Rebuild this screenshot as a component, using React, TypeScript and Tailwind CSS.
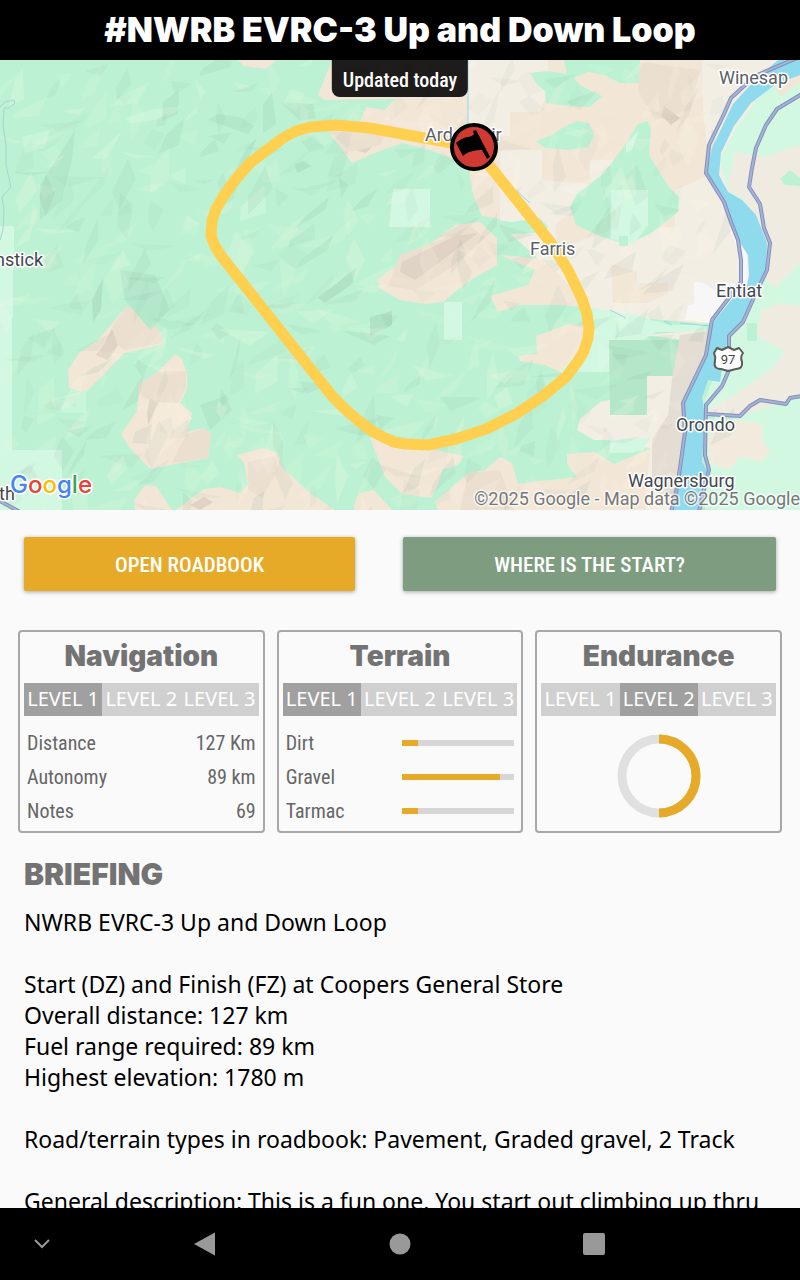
import React from 'react';

interface Point {
  x: number;
  y: number;
}

interface MapLabel {
  name: string;
  at: Point;
  faded?: boolean;
}

interface CardProps {
  title: string;
  level: number;
  children: React.ReactNode;
}

const LEVELS = [1, 2, 3];

const STATS = [
  { label: 'Distance', value: '127 Km' },
  { label: 'Autonomy', value: '89 km' },
  { label: 'Notes', value: '69' },
];

const SURFACES = [
  { label: 'Dirt', percent: 14 },
  { label: 'Gravel', percent: 87 },
  { label: 'Tarmac', percent: 14 },
];

const BRIEFING = `NWRB EVRC-3 Up and Down Loop

Start (DZ) and Finish (FZ) at Coopers General Store
Overall distance: 127 km
Fuel range required: 89 km
Highest elevation: 1780 m

Road/terrain types in roadbook: Pavement, Graded gravel, 2 Track

General description: This is a fun one. You start out climbing up thru`;

const PLACES: MapLabel[] = [
  { name: 'Winesap', at: { x: 719, y: 84 }, faded: true },
  { name: 'Ardenvoir', at: { x: 425, y: 141 }, faded: true },
  { name: 'Farris', at: { x: 530, y: 255 }, faded: true },
  { name: 'Entiat', at: { x: 716, y: 297 } },
  { name: 'Orondo', at: { x: 676, y: 431 } },
  { name: 'Wagnersburg', at: { x: 628, y: 487 } },
  { name: 'nstick', at: { x: -5, y: 266 } },
  { name: 'th', at: { x: -1, y: 500 } },
];

const GREEN = '#bcf2d3';
const PALE_GREEN = '#d2f8e2';
const SAND = '#f2e6d7';
const CREAM = '#f3eee4';

const TERRAIN = [
  // sandy ground east of the forest
  { fill: SAND, d: 'M332 60L318 95L325 100L395 99L385 110L366 107L357 129L328 131L352 163L372 154L402 143L430 150L468 165L473 195L482 216L500 219L535 225L552 232L560 260L500 255L535 270L528 285L490 296L498 312L520 305L562 305L590 308L640 318L680 322L800 330V60Z' },
  { fill: SAND, d: 'M238 60L244 66L266 69L276 60Z' },
  { fill: CREAM, d: 'M468 60H548V90L540 112H510V136H468Z' },
  { fill: CREAM, d: 'M500 150H542V180L590 184V160H613V178L580 205L555 225L560 255L540 260L500 225Z' },
  { fill: CREAM, d: 'M702 60H800V330L640 318L590 308L545 260L600 230L675 227V190L710 175L703 110Z' },
  { fill: SAND, d: 'M611 264L637 272V283H668V294L647 303H613Z' },
  { fill: '#f7f7f7', d: 'M694 282L740 284L741 258L728 225L746 240L748 285L712 323L685 320L688 306L694 304Z' },
  // woodland east of the route
  { fill: GREEN, d: 'M564 60H640V83L620 83L604 75L588 72L574 78L581 86L602 96L590 107L570 106L546 103L545 91L538 85L530 73L548 71L567 74Z' },
  { fill: GREEN, d: 'M536 141L550 136L562 128L577 121L589 123L594 135L588 147L568 150L545 148Z' },
  { fill: GREEN, d: 'M626 144L637 125L647 121L651 128L649 155L668 186L679 197L678 212L650 234L627 244L602 237L576 225L570 207L577 194L603 174Z' },
  { fill: PALE_GREEN, d: 'M611 190H648V225L634 244L611 239Z' },
  { fill: GREEN, d: 'M619 236H628V246H619Z' },
  { fill: PALE_GREEN, d: 'M626 144L639 130L632 150L626 153Z' },
  { fill: GREEN, d: 'M482 218L512 222L540 218L548 227L535 233L510 234L492 230Z' },
  // hills
  { fill: SAND, d: 'M378 280L390 270L425 248L455 225L480 222L497 238V265L466 283L443 302L425 304L400 300L379 288Z' },
  { fill: SAND, d: 'M126 307L136 308L151 320L160 332L163 343L152 347L124 353L104 374L85 393L69 388L68 370L79 353L98 340Z' },
  { fill: SAND, d: 'M175 354L182 359L187 374L187 389L180 403L192 413L187 432L204 428L211 434L208 458L150 469L129 447L121 434L137 411L139 384L158 372Z' },
  { fill: SAND, d: 'M145 485L156 486L172 510H135L134 500Z' },
  { fill: SAND, d: 'M176 510L204 489L220 487L240 493L248 484L244 463L237 455L263 448L278 453L283 468L310 493L335 510Z' },
  { fill: SAND, d: 'M370 438L384 434L427 448L464 456L457 465L443 469L438 485L431 498L402 494L385 477Z' },
  { fill: SAND, d: 'M354 505L359 493L374 490L386 503L392 510H354Z' },
  { fill: SAND, d: 'M438 510L435 502L468 473L485 470L500 457L512 463L518 484L540 481L577 477L567 464L567 454L595 452L614 464L650 449L700 420V510Z' },
  { fill: SAND, d: 'M519 356L537 354L536 336L569 324L588 326L585 350L565 374L545 365L520 361Z' },
  { fill: PALE_GREEN, d: 'M584 306L604 310L640 316L668 325L706 325L705 332L655 332L640 342L612 372H560L588 340Z' },
  { fill: CREAM, d: 'M645 335L706 330L708 352L685 402V435L670 510H645L650 448L610 440L594 440L577 430L580 419L600 402L647 392V376H684V340Z' },
  { fill: '#b4e7c9', d: 'M609 340H684V376H647V415H610Z' },
  { fill: PALE_GREEN, d: 'M610 440L650 438L643 450L630 453H610Z' },
  { fill: '#e4ddd3', d: 'M680 335L708 331L706 355L684 402V435L679 478L675 500L652 490V440L668 415L672 380Z' },
  // east bank of the river
  { fill: PALE_GREEN, d: 'M800 65L760 95L735 130L720 160L728 192L765 240L752 300L728 340L705 400V510H800Z' },
  { fill: '#f0ebe0', d: 'M735 152L765 157L800 145V262L775 288L762 275L768 245L745 200L727 190Z' },
  { fill: '#f0ebe0', d: 'M762 310L780 303L800 306V396L740 416L706 411L730 398L770 370L785 352L756 335Z' },
  { fill: '#f3eade', d: 'M708 436L735 420L762 424L763 443L770 450L762 462L740 456L730 470L710 463Z' },
  { fill: SAND, d: 'M774 88L800 65V82L782 96Z' },
  { fill: GREEN, d: 'M780 179L790 170L800 178V186L785 185Z' },
  { fill: GREEN, d: 'M747 323H757V341H747Z' },
  // cleared plots
  { fill: PALE_GREEN, d: 'M0 226H14V270H13V318H12V450H62V510H0Z' },
  { fill: PALE_GREEN, d: 'M393 189H430V227H389Z' },
  { fill: PALE_GREEN, d: 'M444 302H462V340H444Z' },
];

const SHADES = [
  { fill: '#dfd3c5', d: 'M112 328L118 345L108 360L96 355L105 343Z' },
  { fill: '#ebdfd0', d: 'M126 307L136 308L151 320L160 332L163 343L124 350L118 345L112 328Z' },
  { fill: '#f5ebdb', d: 'M158 402L180 403L192 418L180 436L160 455L152 466L146 440Z' },
  { fill: '#ebdfd0', d: 'M139 384L158 372L186 370L186 388L178 403L155 402L141 396Z' },
  { fill: '#ebdfd0', d: 'M187 434L204 428L211 434L208 458L172 463L180 446Z' },
  { fill: '#dfd3c5', d: 'M150 398L158 403L148 425L147 412Z' },
  { fill: '#ebdfd0', d: 'M400 255L440 240L470 226L485 238L450 268L415 290L388 286Z' },
  { fill: '#dfd3c5', d: 'M402 262L455 236L478 233L440 262L415 280L400 272Z' },
  { fill: '#dfd3c5', d: 'M345 145L360 136L380 139L366 153L350 149Z' },
  { fill: '#ebdfd0', d: 'M328 131L385 134L380 145L352 152Z' },
  { fill: '#ebdfd0', d: 'M640 62L700 70L690 110L655 120L638 90Z' },
  { fill: '#dfd3c5', d: 'M664 106L680 118L671 125L662 116Z' },
  { fill: '#ebdfd0', d: 'M468 473L500 470L514 510H460Z' },
  { fill: '#ebdfd0', d: 'M248 462L275 456L278 470L262 498L248 490Z' },
  { fill: '#dfd3c5', d: 'M190 505L204 497L213 502L200 510Z' },
  { fill: '#b0e2c5', d: 'M318 298L356 268L352 284L325 303Z' },
  { fill: '#b0e2c5', d: 'M92 300L103 278L101 310L93 322Z' },
  { fill: '#b0e2c5', d: 'M295 165L303 161L312 166L297 173Z' },
  { fill: '#b0e2c5', d: 'M370 317L392 311V325L370 336Z' },
  { fill: '#b4e8cb', d: 'M208 120L218 114L240 117L254 126L248 134Z' },
  { fill: '#b4e8cb', d: 'M120 270L155 275L170 310L150 330L125 300Z' },
  { fill: '#b4e8cb', d: 'M40 185L75 130L72 160L62 200L40 220Z' },
  { fill: '#b4e8cb', d: 'M200 405L225 396L232 410L210 430Z' },
  { fill: '#b4e8cb', d: 'M280 102L313 104L316 118L300 121Z' },
  { fill: '#c9f5da', d: 'M125 118L150 110L181 106L175 113L150 121L130 123Z' },
  { fill: '#c9f5da', d: 'M22 137L50 130L45 148L25 153Z' },
  { fill: '#c9f5da', d: 'M241 207L264 185L266 213L240 221Z' },
  { fill: '#c9f5da', d: 'M52 400L86 390V413L56 412Z' },
];

const RIVER =
  'M800 60H778L755 80L733 104L712 148L706 174L724 203L738 240L748 255L749 275L747 285L733 298L713 322L706 355L684 403L686 432L680 468L672 510H698L708 472L702 462L705 415L702 398L708 380L720 382L724 355L729 336L743 320L754 300L766 270L767 243L756 215L742 200L728 192L719 175L721 153L734 126L751 103L776 84L800 75Z';

const ROADS = [
  'M797 58L755 76L731 98L724 114L709 145L706 173L724 202L731 222L738 240L741 260V282L725 303L712 320L706 355L683 403L685 432L680 468L677 488L671 512',
  'M802 94L777 109L766 125L756 148L752 168L749 187L760 204L764 228L770 243L767 270L755 295L743 322L729 336V370L722 386L706 405L705 455L709 470L705 485L699 512',
  'M706 414L740 416L750 406L760 400L786 404L790 398L802 396',
  'M-2 500L20 512',
];

const ROUTE =
  'M474 147L402 134L370 128L335 125L310 127L296 131L283 138L250 163L235 180L223 197L216 209L212 221L211 236L215 246L222 257L313 372L333 397L346 410L360 422L372 431L383 437L394 442L405 444L428 445L456 439L486 429L516 414L543 396L566 377L578 361L584 351L588 338L589 328L587 314L582 299L568 270L551 243L485 160Z';

const DISPLAY = "font-['Inter','Liberation_Sans',sans-serif] font-black";
const CONDENSED = "font-['Roboto_Condensed','Roboto','Liberation_Sans',sans-serif]";

// Seeded so that the relief looks the same on every render
function makeFacets(): { points: string; light: boolean; alpha: number }[] {
  let seed = 4211;
  const next = () => {
    seed = (seed * 16807) % 2147483647;
    return seed / 2147483647;
  };
  const facets = [];
  for (let y = 60; y < 510; y += 24) {
    for (let x = 0; x < 700; x += 24) {
      const cx = x + next() * 30;
      const cy = y + next() * 30;
      const length = 8 + next() * 18;
      const width = 4 + next() * 11;
      const angle = 0.3 - next() * 2.1;
      const ux = Math.cos(angle);
      const uy = Math.sin(angle);
      const bend = (next() - 0.5) * length;
      const corners = [
        [cx - ux * length, cy - uy * length],
        [cx + ux * bend - uy * width, cy + uy * bend + ux * width],
        [cx + ux * length, cy + uy * length],
        [cx - ux * bend + uy * width * next(), cy - uy * bend],
      ];
      facets.push({
        points: corners.map(c => c.map(Math.round).join(',')).join(' '),
        light: next() > 0.5,
        alpha: 0.3 + next() * 0.7,
      });
    }
  }
  return facets;
}

const FACETS = makeFacets();

const RouteMap: React.FC = () => (
  <svg
    viewBox="0 60 800 450"
    preserveAspectRatio="xMidYMid slice"
    className="block w-full font-['Roboto','Liberation_Sans',sans-serif]"
    role="img"
    aria-label="Route map"
  >
    <rect x="0" y="60" width="800" height="450" fill={GREEN} />
    {TERRAIN.map((area, i) => <path key={i} d={area.d} fill={area.fill} />)}
    {SHADES.map((area, i) => <path key={i} d={area.d} fill={area.fill} />)}
    {FACETS.map((facet, i) => (
      <polygon
        key={i}
        points={facet.points}
        fill={facet.light ? '#fffbe8' : '#6f9080'}
        opacity={facet.alpha * (facet.light ? 0.22 : 0.1)}
      />
    ))}
    <path d="M0 107L5 102L14 100L15 103L9 108H4L3 125L6 145V165L11 187L2 197L4 210L3 230L0 240" fill="none" stroke="#a9d3c8" strokeWidth="1" />
    <path d="M468 60V125M517 191L530 203M541 223L547 229M610 310L626 318M664 321L672 325M680 323L710 326" fill="none" stroke="#8edaee" strokeWidth="1" />
    <path d={RIVER} fill="#90daee" />
    <g fill="none" strokeLinejoin="round">
      {ROADS.map(d => <path key={d} d={d} stroke="#8290ba" strokeWidth="4" />)}
      {ROADS.map(d => <path key={d} d={d} stroke="#a5b3d5" strokeWidth="2" />)}
    </g>
    <path d={ROUTE} fill="none" stroke="#ffcf4f" strokeWidth="11" strokeLinejoin="round" />

    <path d="M717 348L722 350L728 347L734 350L739 348L743 353Q740 357 742 362Q743 369 736 369L728 371L721 369Q713 369 715 361Q716 357 714 353Z" fill="#fff" stroke="#5b5b5b" strokeWidth="2" strokeLinejoin="round" />
    <text x="728" y="364" textAnchor="middle" fontSize="13" fill="#444">97</text>

    <g fontSize="18" stroke="#fff" strokeWidth="3" strokeLinejoin="round" paintOrder="stroke">
      {PLACES.map(place => (
        <text key={place.name} x={place.at.x} y={place.at.y} fill={place.faded ? '#5c6068' : '#43474e'}>
          {place.name}
        </text>
      ))}
      <text x="800" y="505" textAnchor="end" fill="#777" strokeOpacity="0.7">
        ©2025 Google - Map data ©2025 Google
      </text>
    </g>

    <text
      x="10"
      y="493"
      stroke="#fff"
      strokeWidth="3"
      strokeLinejoin="round"
      paintOrder="stroke"
      className="font-['Inter','Liberation_Sans',sans-serif] text-[24px] font-medium"
    >
      <tspan fill="#4285f4">G</tspan>
      <tspan fill="#ea4335">o</tspan>
      <tspan fill="#fbbc04">o</tspan>
      <tspan fill="#4285f4">g</tspan>
      <tspan fill="#34a853">l</tspan>
      <tspan fill="#ea4335">e</tspan>
    </text>

    <circle cx="474" cy="147" r="22" fill="#d03a32" stroke="#000" strokeWidth="4" />
    <path d="M456 143Q462 138 467 137Q472 137 474 134L473 131L476 130L490 157L487 159L482 150Q476 150 473 151Q467 152 463 156Z" />
  </svg>
);

const Card: React.FC<CardProps> = ({ title, level, children }) => (
  <section className="flex flex-col rounded border-2 border-[#a8a8a8] px-1 pt-1 pb-[3px]">
    <h2 className={`${DISPLAY} mb-[7px] text-center text-[28px] leading-10 text-[#737373]`}>{title}</h2>
    <ol className="grid grid-cols-3 bg-[#d0d0d0] text-center font-['Noto_Sans','Open_Sans',sans-serif] text-[20px] leading-[31px] whitespace-nowrap text-white">
      {LEVELS.map(n => (
        <li key={n} aria-current={n === level} className={n === level ? 'bg-[#a0a0a0] pb-0.5' : 'pb-0.5'}>
          LEVEL {n}
        </li>
      ))}
    </ol>
    {children}
  </section>
);

export default function App() {
  return (
    <div className="flex h-screen flex-col bg-[#fafafa]">
      <header className="flex h-[60px] shrink-0 items-center justify-center bg-black">
        <h1 className={`${DISPLAY} text-[34px] leading-10 whitespace-nowrap text-white`}>
          #NWRB EVRC-3 Up and Down Loop
        </h1>
      </header>

      <main className="min-h-0 flex-1 overflow-hidden">
        <div className="relative">
          <RouteMap />
          <p className={`${CONDENSED} absolute top-0 left-1/2 -translate-x-1/2 rounded-b-lg bg-black/88 px-[11px] pt-2 pb-1 text-[20px] leading-[25px] font-medium whitespace-nowrap text-white`}>
            Updated today
          </p>
        </div>

        <div className={`${CONDENSED} flex gap-12 px-6 pt-[27px] text-[21px] font-medium text-white`}>
          <button className="h-[54px] flex-auto rounded-xs bg-[#e7aa28] pt-1 shadow-[0_1px_4px_rgba(0,0,0,0.35)]">
            OPEN ROADBOOK
          </button>
          <button className="h-[54px] flex-auto rounded-xs bg-[#7e9d80] pt-1 shadow-[0_1px_4px_rgba(0,0,0,0.35)]">
            WHERE IS THE START?
          </button>
        </div>

        <div className="mt-[39px] grid grid-cols-3 gap-3 px-[18px]">
          <Card title="Navigation" level={1}>
            <dl className={`${CONDENSED} mt-2.5 px-[3px] text-[20px] leading-[34px] text-[#666]`}>
              {STATS.map(stat => (
                <div key={stat.label} className="flex justify-between">
                  <dt>{stat.label}</dt>
                  <dd>{stat.value}</dd>
                </div>
              ))}
            </dl>
          </Card>
          <Card title="Terrain" level={1}>
            <dl className={`${CONDENSED} mt-2.5 px-[3px] text-[20px] leading-[34px] text-[#666]`}>
              {SURFACES.map(surface => (
                <div key={surface.label} className="grid grid-cols-2 items-center gap-1">
                  <dt>{surface.label}</dt>
                  <dd className="h-1.5 bg-[#d6d6d6]">
                    <div className="h-full bg-[#e7aa28]" style={{ width: `${surface.percent}%` }} />
                  </dd>
                </div>
              ))}
            </dl>
          </Card>
          <Card title="Endurance" level={2}>
            <svg viewBox="0 0 84 84" className="mx-auto mt-[18px] size-[84px]" role="img" aria-label="Endurance 50%">
              <circle cx="42" cy="42" r="37" fill="none" stroke="#e0e0e0" strokeWidth="9" />
              <path d="M42 5A37 37 0 0 1 42 79" fill="none" stroke="#e7aa28" strokeWidth="9" />
            </svg>
          </Card>
        </div>

        <article className="px-6 pt-[21px]">
          <h2 className={`${DISPLAY} text-[30px] leading-10 text-[#737373]`}>BRIEFING</h2>
          <p className="mt-[13px] font-['Noto_Sans','Open_Sans',sans-serif] text-[23px] leading-[31px] whitespace-pre-wrap text-black">
            {BRIEFING}
          </p>
        </article>
      </main>

      <nav className="grid h-[72px] shrink-0 grid-cols-[109px_1fr_1fr_1fr_109px] items-center bg-black">
        <button aria-label="Hide" className="pl-[33px]">
          <svg viewBox="0 0 18 12" className="h-3 w-[18px]">
            <path d="M2 2L9 9L16 2" fill="none" stroke="#999" strokeWidth="2" />
          </svg>
        </button>
        <button aria-label="Back" className="flex justify-center">
          <svg viewBox="0 0 24 24" className="size-6">
            <path d="M0 12L20 1Q21 0 21 1V23Q21 24 20 23Z" fill="#999" />
          </svg>
        </button>
        <button aria-label="Home" className="flex justify-center">
          <svg viewBox="0 0 24 24" className="size-6">
            <circle cx="12" cy="12" r="10.500" fill="#999" />
          </svg>
        </button>
        <button aria-label="Recent apps" className="flex justify-center">
          <svg viewBox="0 0 24 24" className="size-6">
            <rect x="1" y="1" width="22" height="22" rx="2" fill="#999" />
          </svg>
        </button>
      </nav>
    </div>
  );
}
